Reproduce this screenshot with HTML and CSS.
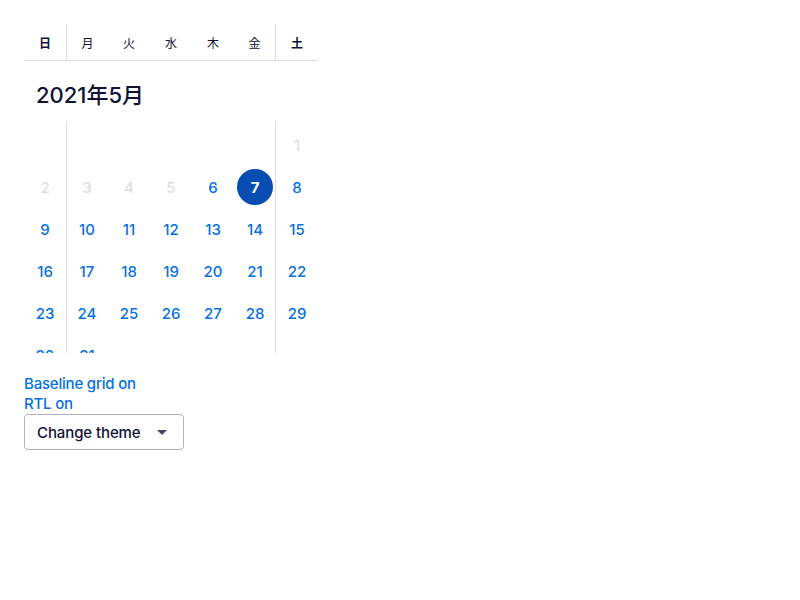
FILE: index.html
```html
<!DOCTYPE html>
<html lang="ja">
<head>
<meta charset="utf-8">
<link rel="stylesheet" href="styles.css">
</head>
<body>
<div class="cal">
  <div class="weekdays">
    <div class="wd wkend">日</div>
    <div class="wd mon">月</div>
    <div class="wd">火</div>
    <div class="wd">水</div>
    <div class="wd">木</div>
    <div class="wd fri">金</div>
    <div class="wd wkend">土</div>
  </div>
  <div class="month">2021年5月</div>
  <div class="body">
    <div class="grid">
      <div></div><div></div><div></div><div></div><div></div><div></div>
      <div class="day off">1</div>
      <div class="day off">2</div><div class="day off">3</div><div class="day off">4</div><div class="day off">5</div>
      <div class="day">6</div><div class="day sel"><span>7</span></div><div class="day">8</div>
      <div class="day">9</div><div class="day">10</div><div class="day">11</div><div class="day">12</div><div class="day">13</div><div class="day">14</div><div class="day">15</div>
      <div class="day">16</div><div class="day">17</div><div class="day">18</div><div class="day">19</div><div class="day">20</div><div class="day">21</div><div class="day">22</div>
      <div class="day">23</div><div class="day">24</div><div class="day">25</div><div class="day">26</div><div class="day">27</div><div class="day">28</div><div class="day">29</div>
      <div class="day">30</div><div class="day">31</div>
    </div>
  </div>
</div>
<div class="links">
  <a class="link">Baseline grid on</a>
  <a class="link">RTL on</a>
</div>
<button class="theme">Change theme<span class="caret"></span></button>
</body>
</html>
```
FILE: styles.css
```css
html, body {
  margin: 0;
  background: #fff;
}
body {
  padding: 24px;
  font-family: Inter, "Noto Sans CJK JP", sans-serif;
  color: #111236;
}
.cal {
  width: 294px;
}
.weekdays {
  display: grid;
  grid-template-columns: repeat(7, 42px);
  height: 36px;
  border-bottom: 1px solid #dddde5;
}
.wd {
  display: flex;
  align-items: center;
  justify-content: center;
  font-size: 12px;
  font-family: "Noto Sans CJK JP", sans-serif;
  color: #111236;
}
.wd.wkend { font-weight: 600; }
.wd.mon { border-left: 1px solid #dddde5; }
.wd.fri { border-right: 1px solid #dddde5; }
.month {
  height: 60px;
  box-sizing: border-box;
  padding: 20px 12px 0;
  font-size: 22px;
  line-height: 28px;
  font-weight: 500;
}
.body {
  height: 232px;
  overflow: hidden;
  padding-top: 3px;
  box-sizing: border-box;
  background-image:
    linear-gradient(#dddde5, #dddde5),
    linear-gradient(#dddde5, #dddde5);
  background-size: 1px 100%, 1px 100%;
  background-position: 42px 0, 251px 0;
  background-repeat: no-repeat;
}
.grid {
  display: grid;
  grid-template-columns: repeat(7, 42px);
  grid-auto-rows: 42px;
}
.day {
  display: flex;
  align-items: center;
  justify-content: center;
  font-size: 15px;
  font-weight: 500;
  color: #0770e3;
}
.day.off { color: #dddde5; }
.day.sel span {
  width: 36px;
  height: 36px;
  border-radius: 50%;
  background: #084eb2;
  color: #fff;
  font-weight: 700;
  display: flex;
  align-items: center;
  justify-content: center;
}
.links {
  margin-top: 21px;
  display: flex;
  flex-direction: column;
}
.link {
  font-size: 15px;
  line-height: 20px;
  color: #0770e3;
  font-weight: 500;
  letter-spacing: -0.2px;
}
.theme {
  width: 160px;
  height: 36px;
  box-sizing: border-box;
  border: 1px solid #b2b2bf;
  border-radius: 4px;
  background: #fff;
  padding: 0 0 0 12px;
  display: flex;
  align-items: center;
  font-family: Inter, sans-serif;
  font-size: 15px;
  font-weight: 500;
  color: #111236;
  letter-spacing: -0.1px;
}
.caret {
  margin-left: auto;
  margin-right: 16px;
  width: 0;
  height: 0;
  border-left: 5px solid transparent;
  border-right: 5px solid transparent;
  border-top: 5px solid #444560;
}
```
